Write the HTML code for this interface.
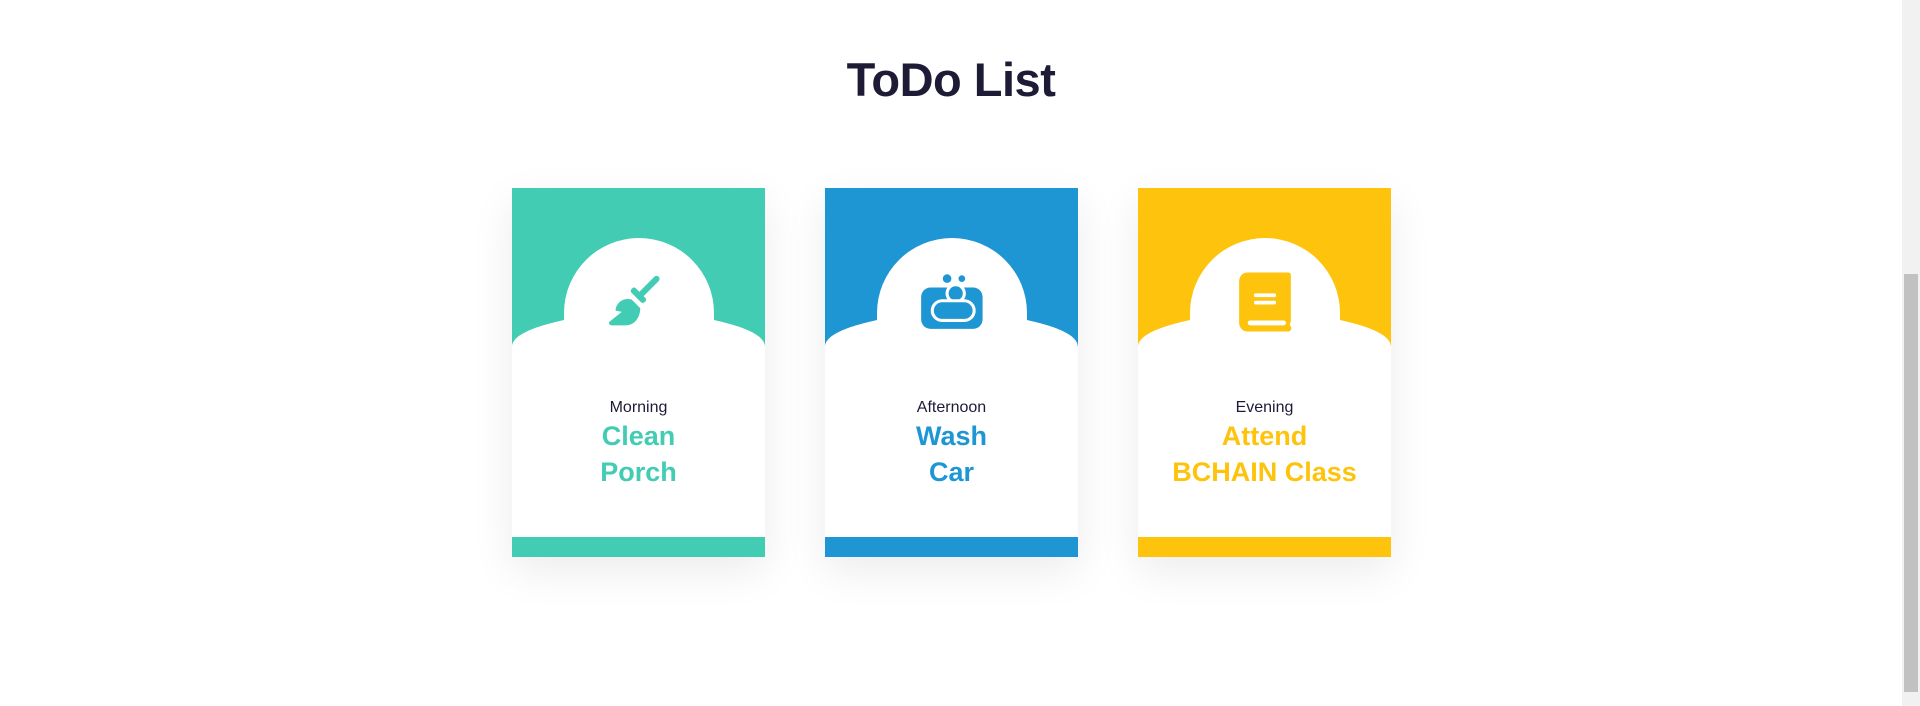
<!DOCTYPE html>
<html><head><meta charset="utf-8"><style>
html,body{margin:0;padding:0;background:#fff;width:1920px;height:706px;overflow:hidden;font-family:"Liberation Sans",sans-serif}
h1{position:absolute;left:0;width:1902px;top:52px;margin:0;text-align:center;font-size:47px;font-weight:bold;color:#1d1b36;letter-spacing:-0.5px}
.card{position:absolute;top:188px;width:253px;height:369px;box-shadow:0 14px 40px rgba(0,0,0,0.08)}
.card svg.bg{position:absolute;left:0;top:0}
.icon{position:absolute;left:95px;top:82px;width:64px;height:64px}
.txt{position:absolute;left:0;width:253px;top:210px;text-align:center}
.sub{font-size:16px;color:#1d1b36;line-height:20px}
.ttl{font-size:27px;font-weight:bold;line-height:36px}
.sb{position:absolute;right:0;top:0;width:18px;height:706px;background:#f1f1f1}
.th{position:absolute;right:2px;top:274px;width:14px;height:418px;background:#c1c1c1}
</style></head><body>
<h1>ToDo List</h1>

<div class="card" style="left:512px">
<svg class="bg" width="253" height="369"><rect width="253" height="369" fill="#43ccb4"/><path d="M0,159 C0,145 30,137 52,132 L52,125 A75,75 0 0 1 202,125 L202,132 C224,137 253,145 253,159 V349 H0 Z" fill="#fff"/></svg>
<svg class="icon" viewBox="0 0 52 52"><g fill="#43ccb4"><rect x="31" y="2" width="5" height="24" rx="2.5" transform="rotate(45 33.5 14)"/><rect x="18" y="18" width="15" height="5" rx="2" transform="rotate(45 25.5 20.5)"/><path d="M20,24 C12,22 7,28 7,33 L12,34 L2,42 C1,43 2,45 4,45 L15,45 C23,45 27,38 27,31 Z"/></g></svg>
<div class="txt"><div class="sub">Morning</div><div class="ttl" style="color:#43ccb4">Clean<br>Porch</div></div>
</div>

<div class="card" style="left:825px">
<svg class="bg" width="253" height="369"><rect width="253" height="369" fill="#1e96d3"/><path d="M0,159 C0,145 30,137 52,132 L52,125 A75,75 0 0 1 202,125 L202,132 C224,137 253,145 253,159 V349 H0 Z" fill="#fff"/></svg>
<svg class="icon" viewBox="0 0 52 52"><g fill="#1e96d3"><circle cx="22" cy="7" r="3.5"/><circle cx="34" cy="7" r="2.7"/><rect x="2" y="19" width="52" height="35" rx="8" transform="translate(-1 -4) scale(0.96)"/></g><circle cx="29" cy="19" r="7" fill="#1e96d3" stroke="#fff" stroke-width="2.5"/><rect x="10" y="25" width="34" height="16" rx="8" fill="#1e96d3" stroke="#fff" stroke-width="2.5"/></svg>
<div class="txt"><div class="sub">Afternoon</div><div class="ttl" style="color:#1e96d3">Wash<br>Car</div></div>
</div>

<div class="card" style="left:1138px">
<svg class="bg" width="253" height="369"><rect width="253" height="369" fill="#fec30c"/><path d="M0,159 C0,145 30,137 52,132 L52,125 A75,75 0 0 1 202,125 L202,132 C224,137 253,145 253,159 V349 H0 Z" fill="#fff"/></svg>
<svg class="icon" viewBox="0 0 52 52"><g fill="#fec30c"><path d="M12,2 H45 C46,2 47,3 47,4 V42 C46,43 46,45 47,46 C48,47 47,50 45,50 H12 C8,50 5,47 5,43 V9 C5,5 8,2 12,2 Z"/></g><g fill="#fff"><rect x="17" y="19" width="18" height="3" rx="1.5"/><rect x="17" y="25" width="18" height="3" rx="1.5"/><rect x="12" y="41" width="31" height="4" rx="2"/></g></svg>
<div class="txt"><div class="sub">Evening</div><div class="ttl" style="color:#fec30c">Attend<br>BCHAIN Class</div></div>
</div>

<div class="sb"><div class="th"></div></div>
</body></html>
